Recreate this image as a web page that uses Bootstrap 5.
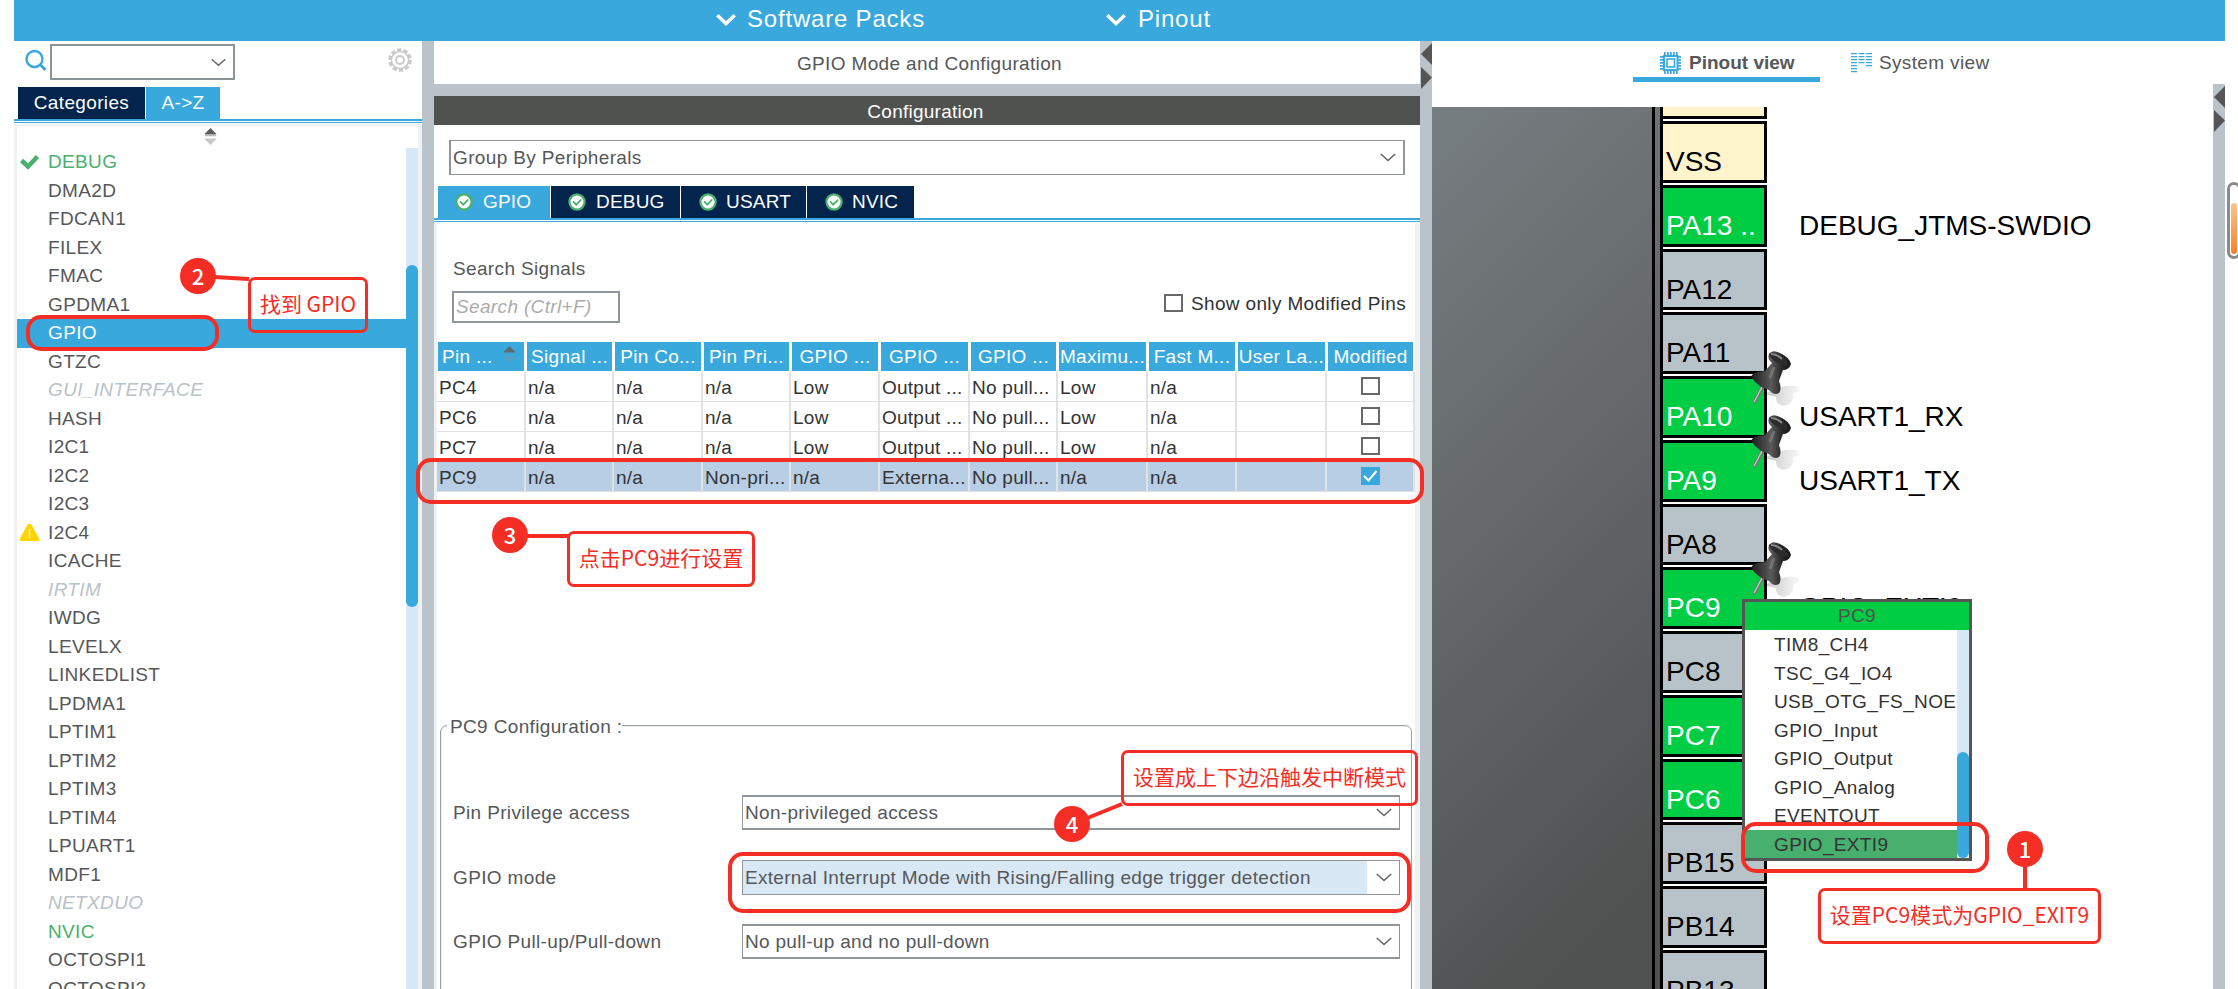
<!DOCTYPE html>
<html lang="zh-CN">
<head>
<meta charset="utf-8">
<meta name="viewport" content="width=device-width, initial-scale=1">
<title>Pinout &amp; Configuration</title>
<link href="https://cdn.jsdelivr.net/npm/bootstrap@5.3.0/dist/css/bootstrap.min.css" rel="stylesheet">
<style>
:root{--blue:#39a8dc;--navy:#03244d;--steel:#b9c3c9;--edge:#f0f1f3;--line:#8f959a;--ink:#555759;--pale:#d9e8f5;--red:#f42d25;--green:#00cc44}
body{font-family:"Liberation Sans",Arial,sans-serif;font-size:19px;line-height:28.5px;letter-spacing:.35px;color:var(--ink);background:#fff;height:989px;overflow:hidden;white-space:nowrap}
svg{display:block;flex:none}
.app{width:2211px;height:989px;margin-left:14px}
.topbar{height:41px;background:var(--blue);color:#fff;font-size:24px;letter-spacing:.8px;padding-bottom:2px}
.topbar .menu-a{margin-left:702px;width:390px;gap:11px}
.topbar .menu-b{gap:12px}
.workspace{height:948px}
.splitter{width:12px;background:var(--steel)}
/* left panel */
.side{width:408px}
.side-search{height:46px;padding:3px 10px 0 10px}
.combo{border:1px solid var(--line);background:#fff;height:35px;padding:0 7px 0 2px;position:relative}
.combo svg{color:#666}
.side-search .combo{width:185px;height:36px;border-width:2px;margin-left:3px;border-color:#8c9399}
.tabs{gap:1px;height:32px;color:#fff}
.tabs>div{background:var(--navy);display:flex;align-items:center}
.tabs>.on{background:var(--blue)}
.rule{height:5px;border-top:2px solid var(--blue);position:relative}
.rule:after{content:"";display:block;height:1px;margin-top:1px;background:var(--blue)}
.side-body{border:solid var(--edge);border-width:2px 4px 0 3px;height:865px;overflow:hidden}
.tree{padding:0;margin:0;width:389px}
.tree li{height:28.5px;display:flex;align-items:center;list-style:none}
.tree li>span:first-child{width:31px;padding-left:3px}
.tree .off{color:#b8c2c9;font-style:italic}
.tree .okay{color:#49b06e}
.tree .sel{background:var(--blue);color:#fff}
.track{width:12px;background:var(--pale)}
.thumb{background:var(--blue);border-radius:6px}
/* centre panel */
.centre{width:986px}
.ttl{height:43px;line-height:46px;text-align:center;padding-left:5px}
.gap-bar{height:12px;background:var(--steel)}
.dark{height:29px;line-height:32px;background:#505250;color:#fff;letter-spacing:.25px;text-align:center;padding-right:3px}
.pane{border:solid var(--edge);border-width:0 5px 0 3px;height:766px}
.grid{display:grid;grid-template-columns:89px 88px 89px 88px 89px 90px 88px 90px 89px 90px 88px}
.grid>div{overflow:hidden;height:30px;line-height:31px;border:solid #dfe3e6;border-width:0 2px 1px 0;padding-left:2px;color:#333;letter-spacing:.25px;position:relative}
.grid>.h{height:29px;line-height:30px;border:0;background:var(--blue);color:#fff;margin:0 2px 1px 1px;padding:0;text-align:center;letter-spacing:.3px}
.grid>.s{background:#b8cee5;border-color:#dfe3e6}
.cbx{width:19px;height:18px;border:2px solid #696969;background:#fff;display:block;flex:none}
.grid .cbx{margin:5px 0 0 32px}
.cbx.ticked{border:0;background:var(--blue)}
.cfg{border:1px solid #9ba1a6;border-radius:7px;height:300px;margin:25px 3px 0 3px;position:relative;box-shadow:inset 1px 1px #e8eaec}
.cfg-name{position:absolute;left:6px;top:-13px;padding:0 0 0 3px;background:#fff}
.cfg-row{display:flex;align-items:center;height:35px;padding:0 11px 0 12px}
.cfg-row>span{width:289px;padding-top:2px}
.cfg-row .combo{flex:1;letter-spacing:.3px}
.cfg-row .combo>span{padding-top:2px}
/* pinout */
.view{width:781px}
.view-tabs{height:66px;padding-left:201px}
.vt{height:41px;border-bottom:5px solid transparent;padding:8px 22px 0 27px}
.vt.on{border-color:var(--blue);font-weight:700;letter-spacing:0}
.canvas{height:882px;overflow:hidden}
.die{width:231px;background:linear-gradient(135deg,#777e82 0,#6d7274 22%,#505252 85%);background-size:231px 930px;border-right:3px solid #000;padding-right:5px}
.die div{border-right:3px solid #000;height:100%}
.pins{margin-top:-49.75px;font-size:28px;letter-spacing:0;color:#000}
.pins>div{height:61.75px;margin-bottom:2px;display:flex}
.pins b{font-weight:400;width:104px;border:3px solid #000;border-left:0;padding-left:3px;line-height:75px;background:#b8c3c9;overflow:hidden}
.pins i{font-style:normal;line-height:81px;padding-left:32px}
.pins .g b{background:var(--green);color:#fff}
.pins .y b{background:#fff4cc}
.right-strip{width:12px;background:var(--steel);margin-top:43px}
.popup{position:absolute;left:1742px;top:599px;width:230px;height:262px;border:3px solid #555;background:#fff;color:#333;letter-spacing:.35px}
.popup .cap{height:28px;background:var(--green);color:#505250;text-align:center;line-height:28px}
.popup .opt{padding-left:29px;height:28.5px;line-height:30px;overflow:hidden}
.popup .pick{background:#48b06e}
/* annotations over the window */
.note{position:absolute;border:3px solid var(--red);border-radius:7px;color:var(--red);font:21px/47px "Noto Sans CJK SC",sans-serif;letter-spacing:0;text-align:center;height:56px}
.ring{position:absolute;border:4px solid var(--red);border-radius:15px}
.num{position:absolute;width:36px;height:36px;border-radius:50%;background:var(--red);color:#fff;font:500 22px/34px "Noto Sans CJK SC",sans-serif;letter-spacing:0;text-align:center}
.over{position:absolute;left:0;top:0;pointer-events:none}
.capsule{position:absolute;left:2227px;top:182px;width:14px;height:77px;border:3px solid #8a8a8a;border-radius:7px;padding:18px 0 0 1px}
.capsule div{width:6px;height:51px;border-radius:3px;background:linear-gradient(#fbc48c,#ff7f27)}
</style>
</head>
<body>
<svg width="0" height="0" class="position-absolute">
<defs>
<symbol id="chev" viewBox="0 0 16 9"><path d="M.8 1 8 7.500 15.200 1" fill="none" stroke="currentColor" stroke-width="1.600"/></symbol>
<symbol id="vbig" viewBox="0 0 20 12"><path d="M1.300 1.300 10 9.600 18.700 1.300" fill="none" stroke="#fff" stroke-width="3.400"/></symbol>
<symbol id="ok" viewBox="0 0 18 18"><circle cx="9" cy="9" r="7.600" fill="#fff" stroke="#49b06e" stroke-width="2.200"/><path d="M5 8.300 8.300 11.600 13.200 6.500" fill="none" stroke="#49b06e" stroke-width="1.800"/></symbol>
<symbol id="sort" viewBox="0 0 13 18"><path d="M6.500 0 12.500 6V7H.5V6Z" fill="#5c5c5c"/><path d="M.5 8H12.500" stroke="#bbb" stroke-width="1.500"/><path d="M.5 11H12.500V12L6.500 18 .5 12Z" fill="#c8c8c8"/></symbol>
<symbol id="sorth" viewBox="0 0 13 18"><path d="M6.500 0 12.500 6V7H.5V6Z" fill="#5f6a70"/><path d="M.5 8H12.500" stroke="#4f9dc4" stroke-width="1.500"/><path d="M.5 11H12.500V12L6.500 18 .5 12Z" fill="#5b9fc0"/></symbol>
<symbol id="arrows" viewBox="0 0 12 48"><path d="M12 2V24L1 13Z" fill="#555"/><path d="M1 26V48L12 36.500Z" fill="#555"/></symbol>
<linearGradient id="pg" x1="0" x2="1"><stop offset="0" stop-color="#1b1b1b"/><stop offset=".5" stop-color="#5a5a5a"/><stop offset=".75" stop-color="#2b2b2b"/><stop offset="1" stop-color="#111"/></linearGradient>
<linearGradient id="sh" x1="0" x2="1"><stop offset="0" stop-opacity=".22"/><stop offset="1" stop-opacity=".03"/></linearGradient>
<symbol id="pushpin" viewBox="0 0 52 60"><path d="M15 46Q25 42 30 40 38 36 50 39 52 43 44 46 45 56 35 58 27 57 27 49Z" fill="url(#sh)"/><path d="M14 38 5 55" stroke="#777" stroke-width="3.600"/><path d="M13 39 5 54" stroke="#ccc" stroke-width="1.200"/><path d="M20 6Q23 1 31 5 40 9 42 16 40 22 34 22L30 33Q33 41 30 45 25 48 20 42 10 40 2 29 3 25 9 24L16 23 23 15Q18 11 20 6Z" fill="url(#pg)"/><path d="M20 6Q24 3 31 7 39 12 40 18 33 18 27 14 21 10 20 6Z" fill="#2c2c2c"/><path d="M22 6Q28 6 33 11" stroke="#8a8a8a" stroke-width="2" fill="none"/><path d="M25 19 21 30" stroke="#888" stroke-width="3" opacity=".6"/></symbol>
</defs>
</svg>

<div class="app d-flex flex-column">
  <header class="topbar d-flex">
    <div class="menu-a d-flex align-items-center"><svg width="20" height="12"><use href="#vbig"/></svg><span>Software Packs</span></div>
    <div class="menu-b d-flex align-items-center"><svg width="20" height="12"><use href="#vbig"/></svg><span>Pinout</span></div>
  </header>
  <main class="workspace d-flex">
    <section class="side">
      <div class="side-search d-flex">
        <svg width="23" height="28" viewBox="0 0 23 28"><circle cx="10.500" cy="15" r="8" fill="none" stroke="#39a8dc" stroke-width="2.400"/><path d="M16 20.500 21.500 26" stroke="#39a8dc" stroke-width="3"/></svg>
        <div class="combo d-flex align-items-center justify-content-end"><svg width="15" height="9"><use href="#chev"/></svg></div>
        <svg class="ms-auto" width="26" height="33" viewBox="0 0 26 33"><g fill="none" stroke="#c9c9c9"><circle cx="14" cy="16" r="10.300" stroke-width="3" stroke-dasharray="4.300 2.170"/><circle cx="14" cy="16" r="8.600" stroke-width="1.500"/><circle cx="14" cy="16" r="4" stroke-width="1.800"/></g></svg>
      </div>
      <div class="tabs d-flex ps-1"><div style="width:127px" class="justify-content-center">Categories</div><div class="on justify-content-center" style="width:74px">A-&gt;Z</div></div>
      <div class="rule"></div>
      <div class="side-body">
        <div class="d-flex justify-content-center" style="height:22px;padding:2px 14px 0 0"><svg width="13" height="17"><use href="#sort"/></svg></div>
        <div class="d-flex h-100">
          <ul class="tree">
            <li class="okay"><span><svg width="19" height="15" viewBox="0 0 19 15"><path d="M1.500 5.500 8 11.500 17.500 1.500" fill="none" stroke="#49b06e" stroke-width="4.500"/></svg></span>DEBUG</li>
            <li><span></span>DMA2D</li><li><span></span>FDCAN1</li><li><span></span>FILEX</li><li><span></span>FMAC</li><li><span></span>GPDMA1</li>
            <li class="sel"><span></span>GPIO</li><li><span></span>GTZC</li><li class="off"><span></span>GUI_INTERFACE</li><li><span></span>HASH</li>
            <li><span></span>I2C1</li><li><span></span>I2C2</li><li><span></span>I2C3</li>
            <li><span><svg width="19" height="17" viewBox="0 0 19 17"><path d="M7.800 0H11.200L19 14.500V17H0V14.500Z" fill="#ffd400"/><path d="M9.500 5V14" stroke="#fff4b0" stroke-width="1.500"/></svg></span>I2C4</li>
            <li><span></span>ICACHE</li><li class="off"><span></span>IRTIM</li><li><span></span>IWDG</li><li><span></span>LEVELX</li><li><span></span>LINKEDLIST</li><li><span></span>LPDMA1</li>
            <li><span></span>LPTIM1</li><li><span></span>LPTIM2</li><li><span></span>LPTIM3</li><li><span></span>LPTIM4</li><li><span></span>LPUART1</li><li><span></span>MDF1</li>
            <li class="off"><span></span>NETXDUO</li><li class="okay"><span></span>NVIC</li><li><span></span>OCTOSPI1</li><li><span></span>OCTOSPI2</li>
          </ul>
          <div class="track"><div class="thumb" style="height:342px;margin-top:117px"></div></div>
        </div>
      </div>
    </section>
    <div class="splitter"></div>
    <section class="centre">
      <div class="ttl">GPIO Mode and Configuration</div>
      <div class="gap-bar"></div>
      <div class="dark">Configuration</div>
      <div style="height:61px;padding:15px 15px 0 15px"><div class="combo d-flex align-items-center justify-content-between" style="border-left-width:2px;border-right-width:2px"><span style="padding-top:1px">Group By Peripherals</span><svg width="16" height="9"><use href="#chev"/></svg></div></div>
      <div class="tabs d-flex ps-1" style="letter-spacing:.2px">
        <div class="on" style="width:112px;padding-left:17px;gap:10px"><svg width="18" height="18"><use href="#ok"/></svg>GPIO</div>
        <div style="width:129px;padding-left:17px;gap:10px"><svg width="18" height="18"><use href="#ok"/></svg>DEBUG</div>
        <div style="width:125px;padding-left:18px;gap:9px"><svg width="18" height="18"><use href="#ok"/></svg>USART</div>
        <div style="width:107px;padding-left:18px;gap:9px"><svg width="18" height="18"><use href="#ok"/></svg>NVIC</div>
      </div>
      <div class="rule"></div>
      <div class="pane">
        <div style="padding:32px 0 0 16px;height:60px">Search Signals</div>
        <div class="d-flex justify-content-between" style="padding:8px 9px 0 15px">
          <div class="combo fst-italic" style="width:168px;height:32px;border-width:2px;color:#ababab">Search (Ctrl+F)</div>
          <div class="d-flex align-items-center" style="gap:8px;height:20px;margin-top:2px;color:#333"><span class="cbx"></span><span style="padding-top:2px">Show only Modified Pins</span></div>
        </div>
        <div class="grid" style="margin-top:19px">
          <div class="h text-start ps-1 d-flex align-items-center" style="gap:10px">Pin ...<svg width="13" height="17" style="margin-top:-4px"><use href="#sorth"/></svg></div><div class="h">Signal ...</div><div class="h">Pin Co...</div><div class="h">Pin Pri...</div><div class="h">GPIO ...</div><div class="h">GPIO ...</div><div class="h">GPIO ...</div><div class="h">Maximu...</div><div class="h">Fast M...</div><div class="h">User La...</div><div class="h">Modified</div>
          <div>PC4</div><div>n/a</div><div>n/a</div><div>n/a</div><div>Low</div><div>Output ...</div><div>No pull...</div><div>Low</div><div>n/a</div><div></div><div><span class="cbx"></span></div>
          <div>PC6</div><div>n/a</div><div>n/a</div><div>n/a</div><div>Low</div><div>Output ...</div><div>No pull...</div><div>Low</div><div>n/a</div><div></div><div><span class="cbx"></span></div>
          <div>PC7</div><div>n/a</div><div>n/a</div><div>n/a</div><div>Low</div><div>Output ...</div><div>No pull...</div><div>Low</div><div>n/a</div><div></div><div><span class="cbx"></span></div>
          <div class="s">PC9</div><div class="s">n/a</div><div class="s">n/a</div><div class="s">Non-pri...</div><div class="s">n/a</div><div class="s">Externa...</div><div class="s">No pull...</div><div class="s">n/a</div><div class="s">n/a</div><div class="s"></div><div class="s"><span class="cbx ticked"><svg width="19" height="18" viewBox="0 0 19 18"><path d="M3 9 7.500 13.500 15.500 4" fill="none" stroke="#fff" stroke-width="2"/></svg></span></div>
        </div>
        <div style="height:208px"></div>
        <div class="cfg">
          <div class="cfg-name">PC9 Configuration :</div>
          <div class="cfg-row" style="margin-top:69px"><span>Pin Privilege access</span><div class="combo d-flex align-items-center justify-content-between" style="border-top-width:2px;border-bottom-width:2px"><span>Non-privileged access</span><svg width="16" height="9"><use href="#chev"/></svg></div></div>
          <div class="cfg-row" style="margin-top:30px"><span>GPIO mode</span><div class="combo d-flex align-items-center" style="padding-left:0"><div class="h-100 flex-fill" style="background:var(--pale);padding:3px 0 0 2px;margin-right:9px">External Interrupt Mode with Rising/Falling edge trigger detection</div><svg width="16" height="9"><use href="#chev"/></svg></div></div>
          <div class="cfg-row" style="margin-top:29px"><span>GPIO Pull-up/Pull-down</span><div class="combo d-flex align-items-center justify-content-between" style="border-top-width:2px;border-bottom-width:2px"><span>No pull-up and no pull-down</span><svg width="16" height="9"><use href="#chev"/></svg></div></div>
        </div>
      </div>
    </section>
    <div class="splitter"><svg width="12" height="48"><use href="#arrows"/></svg></div>
    <section class="view">
      <div class="view-tabs d-flex">
        <div class="vt on d-flex align-items-center" style="width:187px;gap:8px"><svg width="21" height="22" viewBox="0 0 21 22"><g fill="none" stroke="#39a8dc"><path d="M4 1.500H18M4 20.500H18" stroke-width="3" stroke-dasharray="1.700 1.300"/><path d="M1.500 4V19M19.500 4V19" stroke-width="3" stroke-dasharray="1.700 1.300"/><rect x="4" y="4" width="13.500" height="14" fill="#fff" stroke-width="2"/><rect x="7" y="7" width="7.500" height="8" stroke-width="1.600"/></g></svg><span>Pinout view</span></div>
        <div class="vt d-flex align-items-center" style="padding-left:31px;gap:7px"><svg width="21" height="20" viewBox="0 0 21 20"><g fill="none" stroke="#39a8dc" stroke-dasharray="1.200 1.800"><path d="M3 0V20" stroke-width="6"/><path d="M10.500 0V11" stroke-width="6"/><path d="M18 0V14" stroke-width="6"/></g></svg><span>System view</span></div>
      </div>
      <div class="canvas d-flex">
        <div class="die"><div></div></div>
        <div class="pins">
          <div class="y"><b></b></div><div class="y"><b>VSS</b></div><div class="g"><b>PA13 ..</b><i>DEBUG_JTMS-SWDIO</i></div><div><b>PA12</b></div><div><b>PA11</b></div>
          <div class="g"><b>PA10</b><i>USART1_RX</i></div><div class="g"><b>PA9</b><i>USART1_TX</i></div><div><b>PA8</b></div><div class="g"><b>PC9</b><i>GPIO_EXTI9</i></div><div><b>PC8</b></div>
          <div class="g"><b>PC7</b></div><div class="g"><b>PC6</b></div><div><b>PB15</b></div><div><b>PB14</b></div><div><b>PB13</b></div>
        </div>
      </div>
    </section>
    <div class="right-strip"><svg width="12" height="48"><use href="#arrows"/></svg></div>
  </main>
</div>

<svg class="over" width="2238" height="989"><use href="#pushpin" x="1749" y="348" width="52" height="60"/><use href="#pushpin" x="1749" y="412" width="52" height="60"/><use href="#pushpin" x="1749" y="539" width="52" height="60"/></svg>

<div class="popup">
  <div class="cap">PC9</div>
  <div class="d-flex">
    <div class="flex-fill"><div class="opt">TIM8_CH4</div><div class="opt">TSC_G4_IO4</div><div class="opt">USB_OTG_FS_NOE</div><div class="opt">GPIO_Input</div><div class="opt">GPIO_Output</div><div class="opt">GPIO_Analog</div><div class="opt">EVENTOUT</div><div class="opt pick">GPIO_EXTI9</div></div>
    <div class="track"><div class="thumb" style="margin-top:122px;height:106px"></div></div>
  </div>
</div>
<div class="capsule"><div></div></div>

<svg class="over" width="2238" height="989"><g stroke="#f42d25" stroke-width="4"><path d="M214 277 249 279M526 536H569M2025 864V890"/><path d="M1085 819 1122 804"/></g></svg>
<div class="ring" style="left:26px;top:315px;width:193px;height:36px"></div>
<div class="ring" style="left:416px;top:458px;width:1008px;height:46px"></div>
<div class="ring" style="left:728px;top:852px;width:683px;height:61px"></div>
<div class="ring" style="left:1741px;top:822px;width:248px;height:51px"></div>
<div class="note" style="left:248px;top:277px;width:120px">找到 GPIO</div>
<div class="note" style="left:567px;top:531px;width:188px">点击PC9进行设置</div>
<div class="note" style="left:1121px;top:750px;width:297px">设置成上下边沿触发中断模式</div>
<div class="note" style="left:1818px;top:888px;width:283px">设置PC9模式为GPIO_EXIT9</div>
<div class="num" style="left:2007px;top:831px">1</div>
<div class="num" style="left:180px;top:258px">2</div>
<div class="num" style="left:492px;top:517px">3</div>
<div class="num" style="left:1054px;top:806px">4</div>
<script src="https://cdn.jsdelivr.net/npm/bootstrap@5.3.0/dist/js/bootstrap.bundle.min.js"></script>
</body>
</html>
